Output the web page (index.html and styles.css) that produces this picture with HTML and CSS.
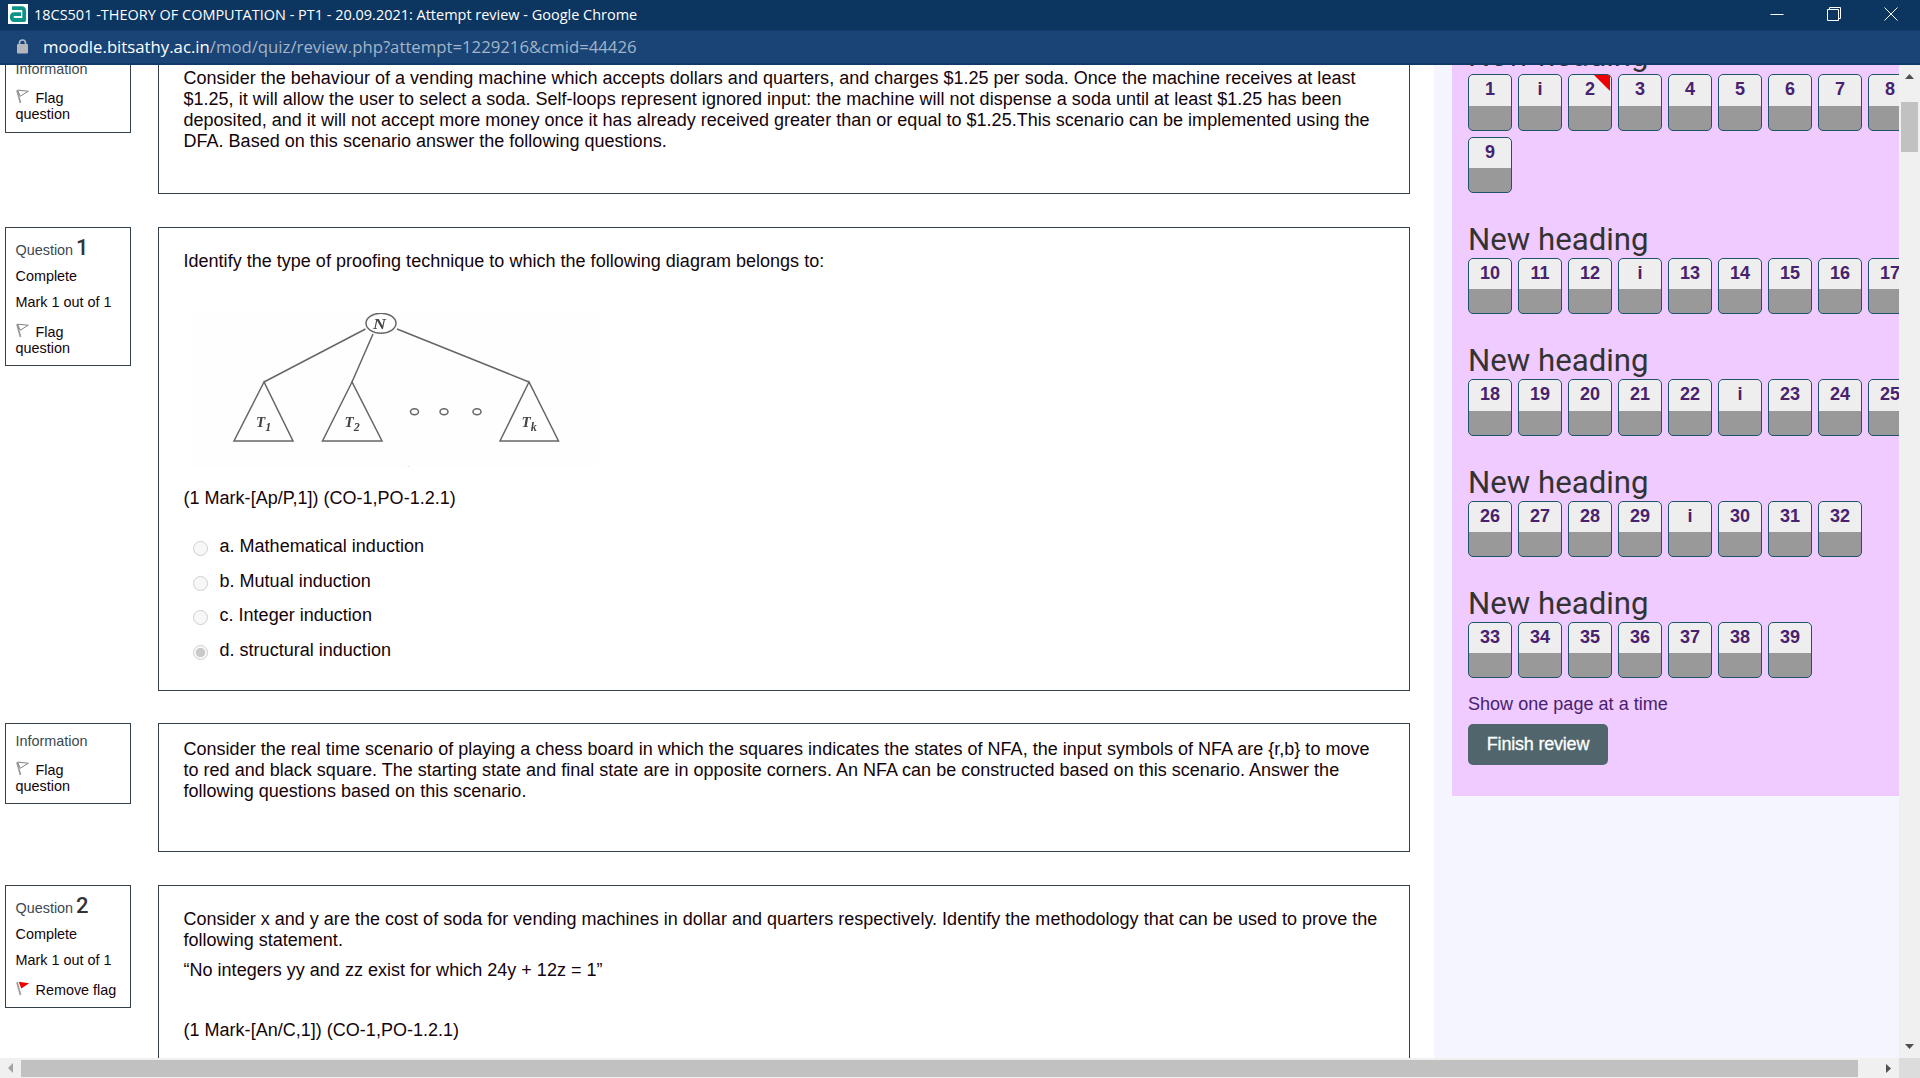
FILE: index.html
```html
<!DOCTYPE html>
<html lang="en">
<head>
<meta charset="utf-8">
<title>18CS501 -THEORY OF COMPUTATION - PT1 - 20.09.2021: Attempt review</title>
<link rel="stylesheet" href="styles.css">
</head>
<body>
<svg class="defs" width="0" height="0">
  <symbol id="flag" viewBox="0 0 14 15"><path d="M1 1.2 4.5 14" fill="none" stroke="#999" stroke-width="1.7"/><path d="M1.5 1.2 12.3 2.2 4.3 7.2Z" fill="#fff" stroke="#777" stroke-width=".9"/></symbol>
  <symbol id="flag-on" viewBox="0 0 14 15"><path d="M1 1.2 4.5 14" fill="none" stroke="#999" stroke-width="1.7"/><path d="M2.8.8 13.2 2.2 5.2 7.4Z" fill="#e00"/></symbol>
</svg>
<div class="window">
  <header class="titlebar">
    <svg class="favicon" width="20" height="20" viewBox="0 0 20 20"><rect width="20" height="20" fill="#fff"/><path d="M4 4.2H13.5Q16.2 4.2 16.2 7V16H6.3Q3.8 16 3.8 13.2Q3.8 10.2 6.3 10.2H13" fill="none" stroke="#0d9488" stroke-width="3.8" stroke-linejoin="round"/></svg>
    <span class="title">18CS501 -THEORY OF COMPUTATION - PT1 - 20.09.2021: Attempt review - Google Chrome</span>
    <div class="controls">
      <svg width="14" height="14" viewBox="0 0 14 14"><path d="M.5 7.5H13.5"/></svg>
      <svg width="14" height="14" viewBox="0 0 14 14"><path d="M.5 2.5H11.5V13.5H.5ZM2.5 2.5V.5H13.5V11.5H11.5"/></svg>
      <svg width="14" height="14" viewBox="0 0 14 14"><path d="M.5.5 13.5 13.5M13.5.5.5 13.5"/></svg>
    </div>
  </header>
  <div class="addressbar">
    <svg width="11" height="15" viewBox="0 0 11 15"><path d="M2.5 6V4A3 3 0 0 1 8.5 4V6" fill="none" stroke="#b4bcc8" stroke-width="1.6"/><rect y="5" width="11" height="9.5" rx="1" fill="#b4b8be"/></svg>
    <span class="url"><b>moodle.bitsathy.ac.in</b>/mod/quiz/review.php?attempt=1229216&amp;cmid=44426</span>
  </div>
  <div class="body">
    <div class="page">
      <main class="questions">
        <section class="question first">
          <aside class="info"><div class="label">Information</div><div class="flag"><svg><use href="#flag"/></svg>Flag<br>question</div></aside>
          <div class="content description">
            <p>Consider the behaviour of a vending machine which accepts dollars and quarters, and charges $1.25 per soda. Once the machine receives at least<br>$1.25, it will allow the user to select a soda. Self-loops represent ignored input: the machine will not dispense a soda until at least $1.25 has been<br>deposited, and it will not accept more money once it has already received greater than or equal to $1.25.This scenario can be implemented using the<br>DFA. Based on this scenario answer the following questions.</p>
          </div>
        </section>
        <section class="question q1">
          <aside class="info"><div class="number">Question <b>1</b></div><div class="state">Complete</div><div class="grade">Mark 1 out of 1</div><div class="flag"><svg><use href="#flag"/></svg>Flag<br>question</div></aside>
          <div class="content">
            <p>Identify the type of proofing technique to which the following diagram belongs to:</p>
            <svg class="tree" width="406" height="154" viewBox="192 313 406 154">
              <rect x="192" y="313" width="406" height="154" fill="#fefefe"/>
              <g fill="none" stroke="#666" stroke-width="1.5">
                <ellipse cx="381" cy="323.3" rx="15" ry="10"/>
                <path d="M365.5 329 264 382M373 334 352 382M397 329 529 382"/>
                <path d="M264 382 234 441H293ZM352 382 322.5 441H382ZM529 382 500 441H558.5Z"/>
                <ellipse cx="414.5" cy="411.7" rx="4" ry="3"/><ellipse cx="444" cy="411.7" rx="4" ry="3"/><ellipse cx="477" cy="411.7" rx="4" ry="3"/>
              </g>
              <g class="node">
                <text x="373" y="328.5" textLength="13" lengthAdjust="spacingAndGlyphs">N</text>
                <text x="256" y="427">T<tspan class="sub" dy="4">1</tspan></text>
                <text x="344.500" y="427">T<tspan class="sub" dy="4">2</tspan></text>
                <text x="521.500" y="427">T<tspan class="sub" dy="4">k</tspan></text>
              </g>
              <circle cx="408.500" cy="467" r="1" fill="#ddd"/>
            </svg>
            <p>(1 Mark-[Ap/P,1]) (CO-1,PO-1.2.1)</p>
            <ul class="answers">
              <li><i class="radio"></i>a. Mathematical induction</li>
              <li><i class="radio"></i>b. Mutual induction</li>
              <li><i class="radio"></i>c. Integer induction</li>
              <li><i class="radio checked"></i>d. structural induction</li>
            </ul>
          </div>
        </section>
        <section class="question second">
          <aside class="info"><div class="label">Information</div><div class="flag"><svg><use href="#flag"/></svg>Flag<br>question</div></aside>
          <div class="content description">
            <p>Consider the real time scenario of playing a chess board in which the squares indicates the states of NFA, the input symbols of NFA are {r,b} to move<br>to red and black square. The starting state and final state are in opposite corners. An NFA can be constructed based on this scenario. Answer the<br>following questions based on this scenario.</p>
          </div>
        </section>
        <section class="question q2">
          <aside class="info"><div class="number">Question <b>2</b></div><div class="state">Complete</div><div class="grade">Mark 1 out of 1</div><div class="flag"><svg><use href="#flag-on"/></svg>Remove flag</div></aside>
          <div class="content">
            <p>Consider x and y are the cost of soda for vending machines in dollar and quarters respectively. Identify the methodology that can be used to prove the<br>following statement.</p>
            <p class="quote">“No integers yy and zz exist for which 24y + 12z = 1”</p>
            <p>(1 Mark-[An/C,1]) (CO-1,PO-1.2.1)</p>
          </div>
        </section>
      </main>
      <div class="drawer">
        <nav class="block">
          <h3>New heading</h3>
          <div class="buttons"><a>1</a><a>i</a><a class="flagged">2</a><a>3</a><a>4</a><a>5</a><a>6</a><a>7</a><a>8</a><a>9</a></div>
          <h3>New heading</h3>
          <div class="buttons"><a>10</a><a>11</a><a>12</a><a>i</a><a>13</a><a>14</a><a>15</a><a>16</a><a>17</a></div>
          <h3>New heading</h3>
          <div class="buttons"><a>18</a><a>19</a><a>20</a><a>21</a><a>22</a><a>i</a><a>23</a><a>24</a><a>25</a></div>
          <h3>New heading</h3>
          <div class="buttons"><a>26</a><a>27</a><a>28</a><a>29</a><a>i</a><a>30</a><a>31</a><a>32</a></div>
          <h3>New heading</h3>
          <div class="buttons"><a>33</a><a>34</a><a>35</a><a>36</a><a>37</a><a>38</a><a>39</a></div>
          <a class="paging">Show one page at a time</a>
          <a class="finish">Finish review</a>
        </nav>
      </div>
    </div>
    <div class="vscroll">
      <svg width="9" height="5" viewBox="0 0 9 5"><path d="M0 5 4.500 0 9 5Z"/></svg>
      <div class="thumb"></div>
      <svg width="9" height="5" viewBox="0 0 9 5"><path d="M0 0 4.500 5 9 0Z"/></svg>
    </div>
  </div>
  <div class="hscroll">
    <svg class="off" width="5" height="10" viewBox="0 0 5 10"><path d="M5 0 0 5 5 10Z"/></svg>
    <div class="thumb"></div>
    <svg width="5" height="9" viewBox="0 0 5 9"><path d="M0 0 5 4.500 0 9Z"/></svg>
    <div class="corner"></div>
  </div>
</div>
</body>
</html>
```
FILE: styles.css
```css
* { box-sizing: border-box; }
body { margin: 0; font: 18px/21px "Liberation Sans", Arial, sans-serif; color: #14040a; background: #fff; overflow: hidden; }
p, h3, ul { margin: 0; padding: 0; }
.defs { display: block; }
.window { height: 1078px; display: flex; flex-direction: column; overflow: hidden; }

.titlebar { height: 30px; background: #0c3560; color: #fff; display: flex; align-items: center; padding: 0 22px 2px 8px; flex: none; }
.title, .url { font-family: "Open Sans", "Noto Sans", sans-serif; white-space: nowrap; }
.title { font-size: 14.47px; margin-left: 6px; }
.controls { margin-left: auto; display: flex; gap: 43px; }
.controls svg { fill: none; stroke: #fff; }
.addressbar { height: 35px; background: #194475; border-top: 1px solid #123b69; border-bottom: 2px solid #103a69; display: flex; align-items: center; padding: 0 0 1px 17px; flex: none; }
.url { font-size: 16.74px; margin-left: 15px; color: #a3b4c8; }
.url b { font-weight: 400; color: #fff; }

.body { flex: 1; min-height: 0; display: flex; }
.page { flex: 1; min-width: 0; display: flex; overflow: hidden; }
.questions { width: 1434px; flex: none; padding-left: 5px; margin-top: -14px; }
.question { display: flex; gap: 27px; align-items: flex-start; }
.first { height: 176px; }
.q1 { height: 496px; }
.second { height: 162px; }
.info { width: 126px; flex: none; border: 1px solid #343f48; padding: 9px 0 9px 9.5px; font-size: 14.4px; line-height: 16px; }
.first .info { padding-bottom: 10px; }
.info .label, .info .number { color: #3c474f; }
.number { line-height: 26px; height: 26px; margin-top: -2px; }
.number b { font: 500 22px/26px Roboto, sans-serif; color: #333; margin-left: -1px; }
.state { margin-top: 7px; }
.grade { margin-top: 10px; }
.flag { margin-top: 14px; }
.label + .flag { margin-top: 13px; }
.flag svg { width: 14px; height: 15px; vertical-align: -1px; margin: -3px 6px 0 0; }
.content { width: 1252px; border: 1px solid #343f48; padding: 23px 25px 0 24.5px; white-space: nowrap; letter-spacing: .016px; }
.description { padding-top: 16px; }
.first .content { height: 143px; }
.q1 .content { height: 464px; }
.second .content { height: 129px; padding-top: 15px; }
.q2 .content { height: 260px; }
.tree { display: block; margin: 41px 0 21px 8.5px; filter: blur(.35px); }
.node { font: italic bold 15px "Liberation Serif", serif; fill: #444; }
.node .sub { font-size: 12px; }
.answers { list-style: none; margin-top: 27px; padding-left: 9.5px; }
.answers li { display: flex; align-items: center; height: 21px; margin-bottom: 13.6px; }
.radio { width: 15px; height: 15px; border: 1px solid #cfcfcf; border-radius: 50%; background: #f7f7f7; margin: 4.5px 11.5px 0 0; }
.checked { background: radial-gradient(circle, #c9c9c9 4.3px, #f7f7f7 5px); }
.quote { margin: 9px 0 39px; }

.drawer { flex: 1; min-width: 0; background: #f4f5ff; padding-left: 18px; overflow: hidden; }
.block { background: #efcbff; height: 731px; padding-left: 16px; display: flex; flex-direction: column; align-items: flex-start; color: #48216f; }
.block h3 { font: 400 31.2px/34px Roboto, sans-serif; color: #333; padding-top: 1px; margin-bottom: 1px; }
.block h3:first-child { margin-top: -27px; }
.buttons { display: grid; grid-template-columns: repeat(9, 44px); gap: 6px; margin-bottom: 28.85px; }
.buttons a { height: 56.5px; border: 1px solid #1f536b; border-radius: 5px; background: linear-gradient(#eee 30.5px, #999 30.5px); text-align: center; font-weight: 700; padding-top: 4px; overflow: hidden; position: relative; }
.flagged::before { content: ""; position: absolute; top: 0; right: 1px; width: 16px; height: 16px; background: #e00; clip-path: polygon(0 0, 100% 0, 100% 100%); }
.paging { margin-top: -13.3px; letter-spacing: .03px; }
.finish { margin-top: 9px; width: 140px; height: 41px; line-height: 41px; border-radius: 5px; background: #51666c; color: #fff; text-align: center; letter-spacing: -.2px; -webkit-text-stroke: .3px #fff; }

.vscroll { width: 21px; flex: none; background: #f0f0f0; display: flex; flex-direction: column; align-items: center; padding: 9px 0; }
.vscroll svg, .hscroll svg { fill: #505050; flex: none; }
.vscroll .thumb { width: 17px; height: 50px; background: #c1c1c1; margin: 23px 0 auto; }
.hscroll { height: 20px; flex: none; background: #f0f0f0; display: flex; align-items: center; padding-left: 8px; }
.hscroll .off { fill: #a3a3a3; }
.hscroll .thumb { width: 1837px; flex: none; height: 17px; background: #c1c1c1; margin: 0 28px 0 8px; }
.corner { width: 21px; height: 20px; background: #dcdcdc; margin-left: auto; }
```
